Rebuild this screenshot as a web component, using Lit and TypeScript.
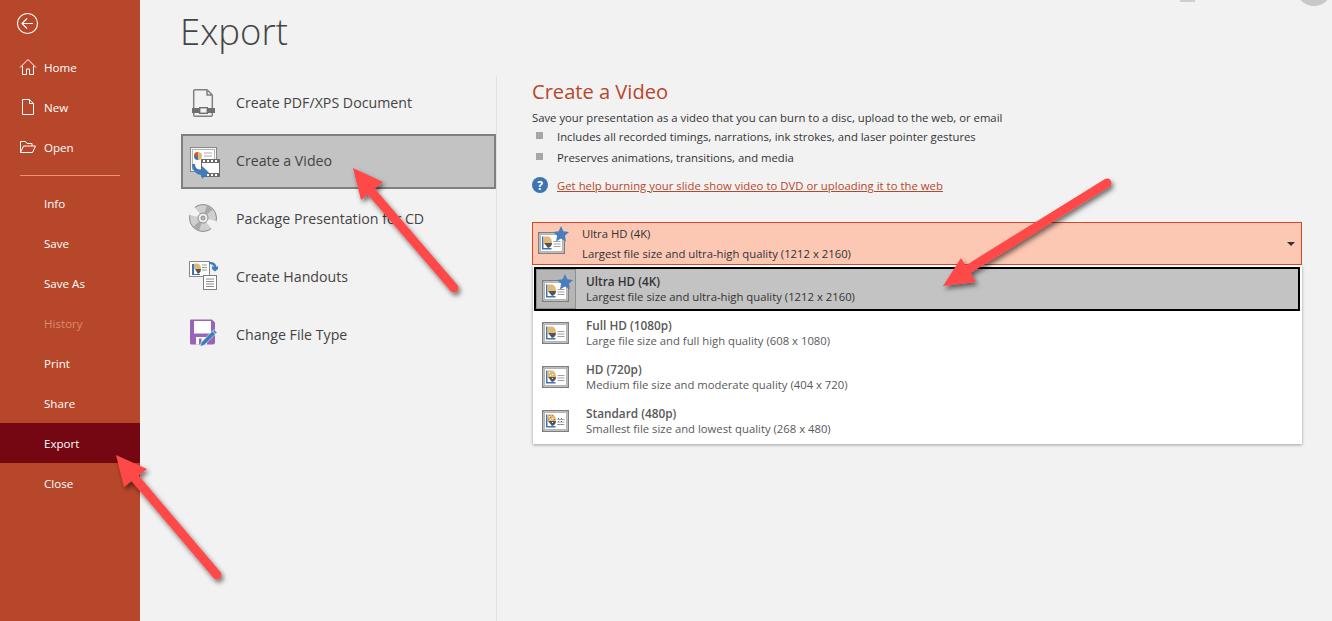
import { LitElement, html, css, svg } from "lit";
import { customElement } from "lit/decorators.js";

const slideBase = (star: boolean, pattern: number) => svg`
  <rect x=".75" y=".75" width="25.500" height="20.500" fill="#fff" stroke="#7f7f7f" stroke-width="1.500"/>
  <rect x="2.500" y="2.500" width="22" height="17" fill="#fff" stroke="#b5b5b5"/>
  <path d="M4 4.500h1.500v11.500h8v1.500H4z" fill="#3f74b0"/>
  <path d="M5.500 4.500h4c2.500 0 4.500 2.500 4.500 6.500H5.500z" fill="#e1b977"/>
  <path d="M6 11h8c0 2.500-1.500 4.500-4 5z" fill="#555"/>
  <path d="M15.500 9.500h7M15.500 12h7M15.500 14.500h7" stroke="#a0a0a0"/>
  ${pattern > 0 ? svg`<path d="M7 6h1v1H7zM10 8h1v1h-1zM8 9h1v1H8zM10 12h1v1h-1zM16 6h3v1h-3z" fill="#fff"/>` : ""}
  ${pattern > 1 ? svg`<path d="M7 5h1v1H7zM10 5h1v1h-1zM8 7h1v1H8zM12 9h1v1h-1zM6 9h1v1H6z" fill="#d9622b"/><path d="M16 8h1v1h-1zM19 8h1v1h-1zM16 11h1v1h-1zM19 11h1v1h-1zM16 14h1v1h-1zM19 14h1v1h-1z" fill="#4a8a7a"/>` : ""}
  ${star ? svg`<path d="M23-6l2.400 5.200 5.600.7-4.100 3.900 1.100 5.600-5-2.800-5 2.800 1.100-5.600-4.100-3.900 5.600-.7z" fill="#4a7ebb"/>` : ""}`;

const NAV = [
  { t: "Home", ic: "home" }, { t: "New", ic: "new" }, { t: "Open", ic: "open" },
  { sep: true },
  { t: "Info" }, { t: "Save" }, { t: "Save As" }, { t: "History", dim: true },
  { t: "Print" }, { t: "Share" }, { t: "Export", active: true }, { t: "Close" },
] as any[];

const navIcon = (n: string) => {
  if (n === "home") return html`<svg class="nav-ic" width="18" height="18" viewBox="0 0 18 18" fill="none" stroke="#fff"><path d="M1 9.500 9 1.500l8 8M3.500 8v8.500h4v-5.500h3v5.500h4V8"/></svg>`;
  if (n === "new") return html`<svg class="nav-ic" width="18" height="18" viewBox="0 0 18 18" fill="none" stroke="#fff"><path d="M3.500 1.500h7l4 4v11h-11zM10.500 1.500v4h4"/></svg>`;
  return html`<svg class="nav-ic" width="18" height="18" viewBox="0 0 18 18" fill="none" stroke="#fff"><path d="M1.500 14.500v-11h5l1.500 2h5v2.500M1.500 14.500l3-6.500h12l-3 6.500z"/></svg>`;
};

const pdfIcon = svg`<svg width="30" height="30" viewBox="0 0 30 30" fill="none">
  <path d="M18 2.700H6a1.300 1.300 0 0 0-1.300 1.300v24a1.300 1.300 0 0 0 1.300 1.300h16a1.300 1.300 0 0 0 1.300-1.300V8zM18 2.700V8h5.300" stroke="#808080" stroke-width="1.500" stroke-linejoin="round"/>
  <rect x="3" y="21" width="7" height="5" fill="#6f6f6f"/><rect x="19" y="21" width="7" height="5" fill="#6f6f6f"/>
  <rect x="10.700" y="20.700" width="7.600" height="5.600" fill="#f2f2f2" stroke="#6f6f6f" stroke-width="1.400"/></svg>`;

const videoIcon = svg`<svg width="32" height="36" viewBox="0 0 32 36" fill="none">
  <rect x="1.500" y="5.500" width="26" height="24" fill="#f6f6f6" stroke="#888"/>
  <rect x="3.500" y="7.500" width="22" height="20" fill="#fff" stroke="#b5b5b5"/>
  <circle cx="9" cy="14" r="4" fill="#e1b977"/><path d="M9 14v-4a4 4 0 0 0-4 4z" fill="#d2582a"/><path d="M5 14a4 4 0 0 0 4 4v-4z" fill="#3f74b0"/>
  <path d="M15 11h8M15 14h8" stroke="#aaa"/>
  <rect x="12.500" y="17.500" width="18" height="17" fill="#fff" stroke="#6b6b6b"/>
  <path d="M12 17h19v4H12zM12 31h19v4H12z" fill="#6b6b6b"/>
  <path d="M14 18h2v2h-2zM18 18h2v2h-2zM22 18h2v2h-2zM26 18h2v2h-2zM14 32h2v2h-2zM18 32h2v2h-2zM22 32h2v2h-2zM26 32h2v2h-2z" fill="#fff"/>
  <path d="M3 22h3c0 4 3 6 7 6v-4l7 6.500-7 6.500v-4C7 33 3 28 3 22z" fill="#3f7cbc"/></svg>`;

const cdIcon = svg`<svg width="30" height="30" viewBox="0 0 30 30">
  <circle cx="14" cy="15" r="13.500" fill="#cfcfcf" stroke="#8c8c8c"/>
  <path d="M14 15 5 3.500A14 14 0 0 0 .5 12zM14 15l9 11.500a14 14 0 0 0 4.500-8.500z" fill="#f2f2f2"/>
  <path d="M14 15 18 2a14 14 0 0 1 6 4zM14 15l-4 13a14 14 0 0 1-6-4z" fill="#a9a9a9"/>
  <circle cx="14" cy="15" r="5" fill="#efefef" stroke="#8c8c8c"/><circle cx="14" cy="15" r="2" fill="#bbb" stroke="#8c8c8c"/></svg>`;

const handoutIcon = svg`<svg width="30" height="30" viewBox="0 0 30 30" fill="none">
  <rect x=".5" y=".5" width="20" height="15" fill="#fff" stroke="#888"/>
  <path d="M3 3h2v10h6v1H3z" fill="#3f74b0"/><path d="M5 2.500h3c2.500 0 4 2 4 5.500H5z" fill="#e1b977"/><path d="M6 8h6c0 2-1 4-3 5z" fill="#555"/>
  <path d="M13 4h5M13 6.500h5M13 9h5" stroke="#999"/>
  <rect x="14.500" y="14.500" width="13" height="14" fill="#fff" stroke="#7f7f7f"/>
  <path d="M17 18h8M17 20.500h8M17 23h8M17 25.500h8" stroke="#8a8a8a"/>
  <path d="M20 1c4-.5 7 1 7.500 5l1.500-1v3l-3 2.500-3-2.500V5l2 1c-.5-2-2.500-3-5-3z" fill="#3f7cbc"/></svg>`;

const saveIcon = svg`<svg width="28" height="30" viewBox="0 0 28 30">
  <path d="M1 1.500a1 1 0 0 1 1-1h21l3 3v20a2 2 0 0 1-2 2H2.500A1.500 1.500 0 0 1 1 24z" fill="#9a63b5"/>
  <rect x="5" y="2" width="17" height="12.500" fill="#fff"/>
  <rect x="7" y="18" width="11" height="7.500" fill="#fff"/><rect x="10" y="19.500" width="2.500" height="6" fill="#9a63b5"/>
  <path d="M11 27.500l1.500-4.500L25 10.500l3 3L15.500 26z" fill="#3f7cbc" stroke="#fff" stroke-width=".6"/>
  <path d="M23.500 12l3 3" stroke="#fff" stroke-width=".8"/></svg>`;

const OPTIONS = [
  { t: "Full HD (1080p)", d: "Large file size and full high quality (608 x 1080)", p: 0 },
  { t: "HD (720p)", d: "Medium file size and moderate quality (404 x 720)", p: 1 },
  { t: "Standard (480p)", d: "Smallest file size and lowest quality (268 x 480)", p: 2 },
];

const TILES = [
  { t: "Create PDF/XPS Document", i: pdfIcon },
  { t: "Create a Video", i: videoIcon, sel: true },
  { t: "Package Presentation for CD", i: cdIcon },
  { t: "Create Handouts", i: handoutIcon },
  { t: "Change File Type", i: saveIcon },
] as any[];

@customElement("app-root")
export class AppRoot extends LitElement {
  static styles = css`
    :host { display: block; width: 1332px; height: 621px; position: relative; overflow: hidden;
      background: #f2f2f2; font-family: "Open Sans", "Noto Sans", sans-serif; color: #444; }
    .page { display: flex; height: 621px; }
    .side { width: 140px; flex: none; background: #b7472a; color: #fff; display: flex; flex-direction: column; }
    .back { height: 47px; padding: 13px 0 0 17px; box-sizing: border-box; flex: none; }
    .back svg { display: block; }
    .nav { height: 40px; flex: none; display: flex; align-items: center; padding-left: 44px; position: relative; font-size: 11.600px; }
    .nav.active { background: #750712; }
    .nav.dim { color: #d98a72; }
    .nav-ic { position: absolute; left: 19px; top: 11px; }
    .sep { height: 1px; background: #f0907a; margin: 8px 20px 7px 20px; flex: none; }
    .sep-box { height: 16px; flex: none; }
    .main { flex: 1; display: flex; flex-direction: column; min-width: 0; }
    h1 { margin: 0; height: 76px; box-sizing: border-box; padding: 5px 0 0 40px; font-weight: 300; font-size: 36.500px; line-height: 52px; color: #444; }
    .cols { flex: 1; display: flex; min-height: 0; }
    .list { width: 356px; box-sizing: border-box; padding: 0 0 0 41px; flex: none; }
    .list-inner { width: 315px; display: flex; flex-direction: column; margin-top: -3px; }
    .tile { height: 58px; box-sizing: border-box; display: flex; align-items: center; padding: 0 0 0 6px; font-size: 14.200px; color: #444; border: 2px solid transparent; }
    .tile.sel { background: #c3c3c3; border-color: #7f7f7f; height: 55px; margin-top: 3px; padding-bottom: 3px; }
    .tile .ic { width: 47px; display: flex; align-items: center; flex: none; }
    .tile svg { display: block; overflow: visible; }
    .panel { flex: 1; border-left: 1px solid #e1e1e1; padding: 0 30px 0 35px; box-sizing: border-box; min-width: 0; }
    h2 { margin: 0; font-weight: 400; font-size: 20.100px; line-height: 28px; color: #b7472a; padding-top: 2px; }
    .desc { font-size: 11.300px; line-height: 20px; height: 18px; margin-top: 2px; color: #333; }
    .bul { display: flex; align-items: center; height: 21px; font-size: 11.300px; color: #333; }
    .bul i { width: 7px; height: 7px; background: #a6a6a6; margin: 0 0 3px 4px; flex: none; }
    .bul span { margin-left: 14px; }
    .help { display: flex; align-items: center; margin-top: 7px; height: 20px; font-size: 11.300px; }
    .help a { color: #b7472a; text-decoration: underline; margin-left: 9px; letter-spacing: .03px; }
    .q { width: 16px; height: 16px; border-radius: 50%; background: #3f74b0; color: #fff; font-size: 12px; font-weight: 700; display: flex; align-items: center; justify-content: center; flex: none; }
    .dd { margin-top: 27px; height: 43px; box-sizing: border-box; border: 1px solid #d24726; background: #fcc7b3; display: flex; align-items: center; position: relative; color: #333; }
    .dd .di { width: 49px; padding: 0 0 2px 5px; box-sizing: border-box; flex: none; }
    .dd .tx { font-size: 11.300px; line-height: 20px; }
    .caret { position: absolute; right: 6px; top: 19px; width: 0; height: 0; border: 4px solid transparent; border-top: 4px solid #333; border-bottom: 0; }
    .menu { margin-left: 1px; background: #fff; height: 179px; box-shadow: 0 1px 3px rgba(0,0,0,.35); box-sizing: border-box; padding: 2px 2px 0 1px; }
    .opt { height: 44px; display: flex; align-items: center; color: #595959; box-sizing: border-box; padding-left: 8px; }
    .opt .oi { width: 44px; flex: none; }
    .opt .tx { font-size: 11.300px; line-height: 16.500px; }
    .opt b { font-weight: 600; font-size: 11.800px; display: block; }
    .opt span { display: block; }
    .opt.sel { background: #c3c3c3; border: 2px solid #000; color: #333; padding-left: 0; }
    .opt.sel .oi { width: 40px; height: 40px; background: #b6b6b6; border: 1px solid #8f8f8f; box-sizing: border-box; margin-right: 10px; padding: 10px 0 0 5px; }
    .opt svg, .dd svg { display: block; overflow: visible; }
    .arrows { position: absolute; left: 0; top: 0; pointer-events: none; }
    .gray-a { position: absolute; left: 1180px; top: 0; width: 15px; height: 2px; background: #cfcfcf; }
    .gray-c { position: absolute; left: 1296px; top: -30px; width: 36px; height: 36px; border-radius: 50%; background: #c8c8c8; }
  `;

  render() {
    return html`
      <div class="page">
        <aside class="side">
          <div class="back">
            <svg width="22" height="22" viewBox="0 0 22 22" fill="none" stroke="#fff" stroke-width="1.100">
              <circle cx="10.500" cy="10.500" r="10"/><path d="M5 10.500h11M10 5.500l-5 5 5 5"/>
            </svg>
          </div>
          ${NAV.map((n) => n.sep
            ? html`<div class="sep-box"><div class="sep"></div></div>`
            : html`<div class="nav ${n.active ? "active" : ""} ${n.dim ? "dim" : ""}">${n.ic ? navIcon(n.ic) : ""}${n.t}</div>`)}
        </aside>
        <main class="main">
          <h1>Export</h1>
          <div class="cols">
            <div class="list"><div class="list-inner">
              ${TILES.map((t) => html`<div class="tile ${t.sel ? "sel" : ""}"><div class="ic">${t.i}</div>${t.t}</div>`)}
            </div></div>
            <section class="panel">
              <h2>Create a Video</h2>
              <div class="desc">Save your presentation as a video that you can burn to a disc, upload to the web, or email</div>
              <div class="bul"><i></i><span>Includes all recorded timings, narrations, ink strokes, and laser pointer gestures</span></div>
              <div class="bul"><i></i><span>Preserves animations, transitions, and media</span></div>
              <div class="help"><div class="q">?</div><a>Get help burning your slide show video to DVD or uploading it to the web</a></div>
              <div class="dd">
                <div class="di"><svg width="27" height="22" viewBox="0 0 27 22">${slideBase(true, 0)}</svg></div>
                <div class="tx">Ultra HD (4K)<br>Largest file size and ultra-high quality (1212 x 2160)</div>
                <div class="caret"></div>
              </div>
              <div class="menu">
                <div class="opt sel">
                  <div class="oi"><svg width="27" height="22" viewBox="0 0 27 22">${slideBase(true, 0)}</svg></div>
                  <div class="tx"><b>Ultra HD (4K)</b><span>Largest file size and ultra-high quality (1212 x 2160)</span></div>
                </div>
                ${OPTIONS.map((o) => html`<div class="opt">
                  <div class="oi"><svg width="27" height="22" viewBox="0 0 27 22">${slideBase(false, o.p)}</svg></div>
                  <div class="tx"><b>${o.t}</b><span>${o.d}</span></div>
                </div>`)}
              </div>
            </section>
          </div>
        </main>
      </div>
      <div class="gray-a"></div>
      <div class="gray-c"></div>
      <svg class="arrows" width="1332" height="621" viewBox="0 0 1332 621" fill="none">
        <defs><filter id="s" x="-20%" y="-20%" width="140%" height="140%"><feDropShadow dx="2" dy="3" stdDeviation="2.500" flood-color="#000" flood-opacity=".55"/></filter></defs>
        <g filter="url(#s)">
          <path d="M370 190 454 288" stroke="#ff4848" stroke-width="9" stroke-linecap="round"/>
          <path d="M353 168 383 182 361 200z" fill="#ff4848"/>
        </g>
        <g filter="url(#s)">
          <path d="M962 273 1107 183" stroke="#ff4848" stroke-width="9" stroke-linecap="round"/>
          <path d="M943 286 961 258 976 282z" fill="#ff4848"/>
        </g>
        <g filter="url(#s)">
          <path d="M134 477 217 575" stroke="#ff4848" stroke-width="9" stroke-linecap="round"/>
          <path d="M116 455 147 469 124 487z" fill="#ff4848"/>
        </g>
      </svg>
    `;
  }
}
